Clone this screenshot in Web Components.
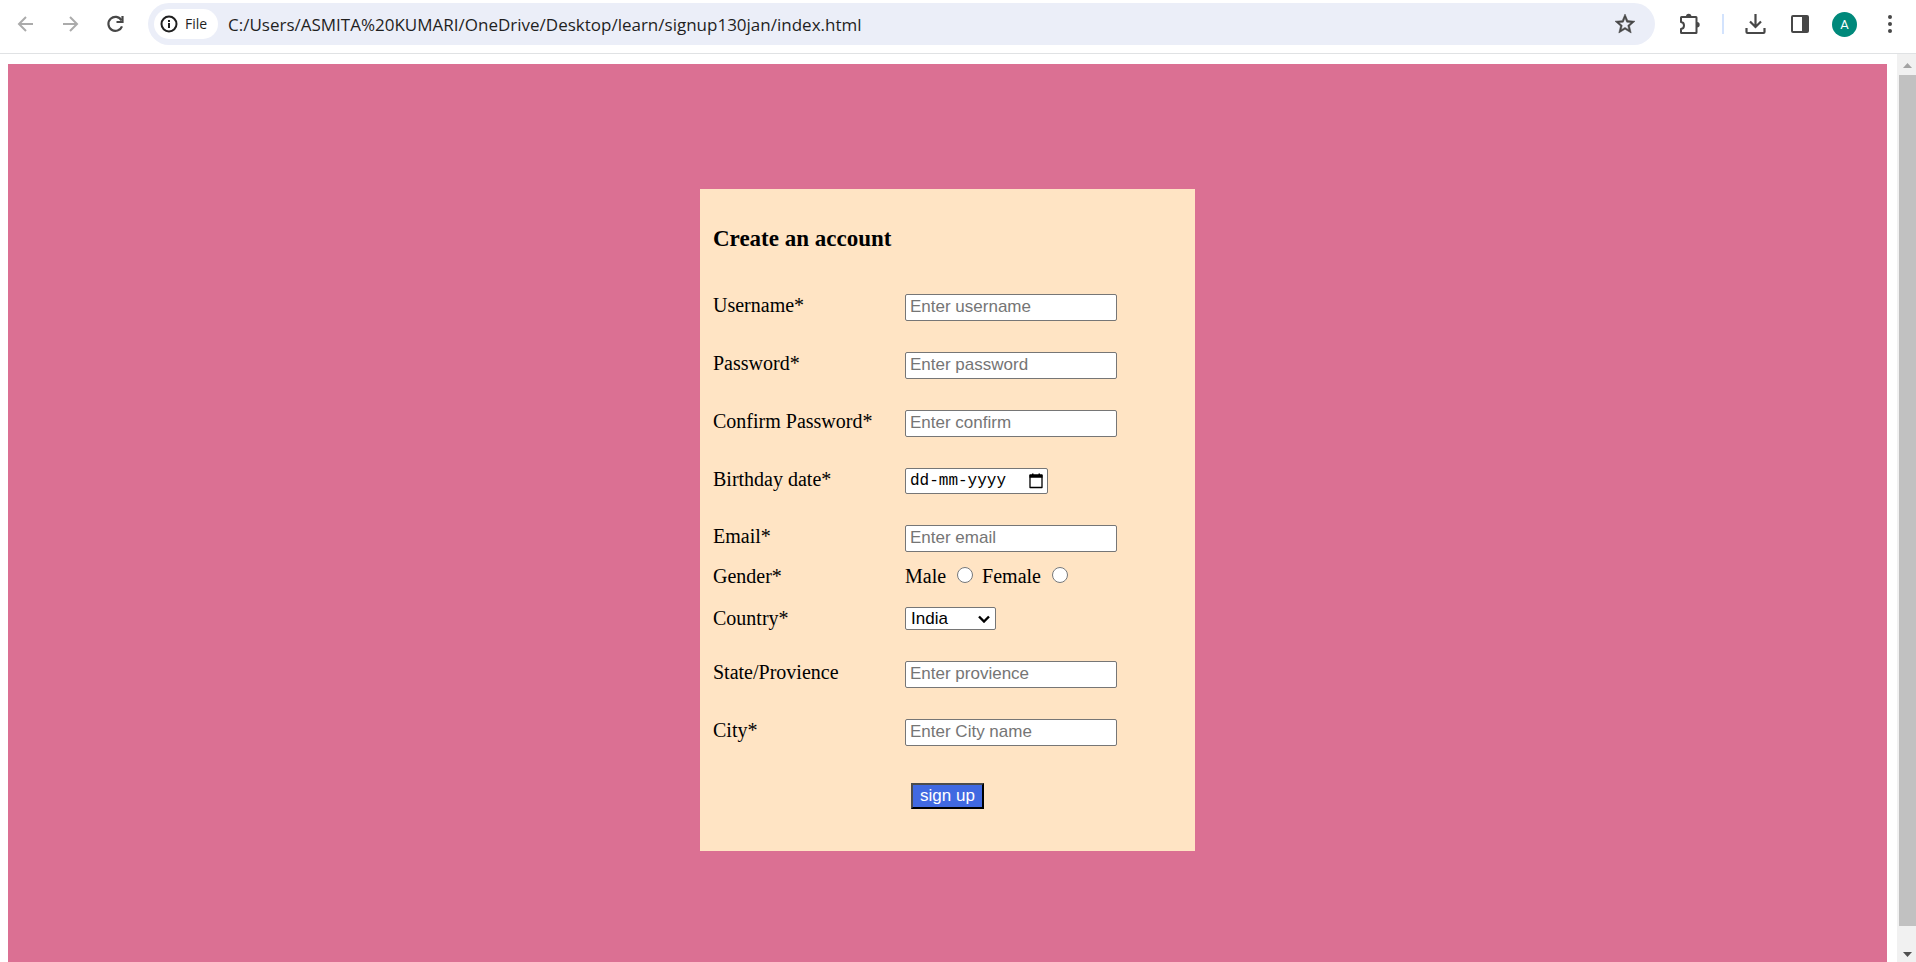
<!DOCTYPE html>
<html lang="en">
<head>
<meta charset="utf-8">
<title>Create an account</title>
<style>
html, body { margin: 0; height: 100%; overflow: hidden; background: #fff; }
</style>
</head>
<body>
<browser-window></browser-window>
<script>
const define = (name, html, setup) => {
  const template = document.createElement('template');
  template.innerHTML = html;
  customElements.define(name, class extends HTMLElement {
    constructor() {
      super();
      this.attachShadow({ mode: 'open' }).append(template.content.cloneNode(true));
    }
    connectedCallback() { if (setup) setup(this, this.shadowRoot); }
  });
};

/* Square toolbar button; the icon is passed in as an svg */
define('icon-button', `
  <style>
    :host { display: block; flex: none; color: #474747; }
    :host([disabled]) { color: #ababab; }
    button { display: grid; place-items: center; width: 24px; height: 24px; margin: 0; padding: 0; border: 0; background: none; color: inherit; }
  </style>
  <button type="button"><slot></slot></button>`,
  (host, root) => {
    const b = root.querySelector('button');
    b.setAttribute('aria-label', host.getAttribute('name'));
    b.disabled = host.hasAttribute('disabled');
  });

define('address-bar', `
  <style>
    :host { display: flex; align-items: center; flex: 1; min-width: 0; height: 42px; padding: 0 18px 0 6px; box-sizing: border-box; border-radius: 21px; background: #ebeef8; color: #1f1f1f; }
    button { display: flex; align-items: center; gap: 7px; flex: none; height: 30px; width: 64px; padding: 0 0 0 6px; border: 0; border-radius: 15px; background: #fff; color: #1f1f1f; font: 14px/20px "Open Sans", "Noto Sans", sans-serif; }
    input { flex: 1; min-width: 0; height: 30px; margin: 0 0 0 10px; padding: 0; border: 0; outline: 0; background: none; color: #1f1f1f; font: 17px/24px "Open Sans", "Noto Sans", sans-serif; }
  </style>
  <button type="button">
    <svg width="18" height="18" viewBox="0 0 18 18"><circle cx="9" cy="9" r="7.5" fill="none" stroke="currentColor" stroke-width="2"/><path d="M8 8h2v5H8zM8 5h2v2H8z" fill="currentColor"/></svg>
    <span>File</span>
  </button>
  <input type="text" aria-label="Address" spellcheck="false" value="C:/Users/ASMITA%20KUMARI/OneDrive/Desktop/learn/signup130jan/index.html">
  <icon-button name="Bookmark this page">
    <svg width="24" height="24" viewBox="0 0 24 24" fill="currentColor"><path d="M22 9.24l-7.19-.62L12 2 9.19 8.63 2 9.24l5.46 4.73L5.82 21 12 17.27 18.18 21l-1.63-7.03L22 9.24zM12 15.4l-3.76 2.27 1-4.28-3.32-2.88 4.38-.38L12 6.1l1.71 4.04 4.38.38-3.32 2.88 1 4.28L12 15.4z" stroke="currentColor" stroke-width=".5"/></svg>
  </icon-button>`);

define('browser-toolbar', `
  <style>
    :host { display: flex; align-items: center; flex: none; height: 53px; padding: 0 15px 5px 14px; box-sizing: border-box; background: #fff; }
    nav { display: flex; gap: 21px; margin-right: 20px; }
    .tools { display: flex; align-items: center; gap: 20px; margin-left: 23px; }
    .divider { width: 2px; height: 20px; background: #d3e3fd; }
    .avatar { width: 25px; height: 25px; padding: 0; border: 0; border-radius: 50%; background: #00897b; color: #fff; font: 13px/25px Roboto, sans-serif; text-align: center; }
  </style>
  <nav>
    <icon-button name="Back" disabled><svg width="24" height="24" viewBox="0 0 24 24" fill="none" stroke="currentColor" stroke-width="2"><path d="M19 12H6M12 5l-7 7 7 7"/></svg></icon-button>
    <icon-button name="Forward" disabled><svg width="24" height="24" viewBox="0 0 24 24" fill="none" stroke="currentColor" stroke-width="2"><path d="M4 12h13M11 5l7 7-7 7"/></svg></icon-button>
    <icon-button name="Reload"><svg width="24" height="24" viewBox="0 0 24 24" fill="none" stroke="currentColor" stroke-width="2.2"><path d="M18 14.3A7 7 0 1 1 17.500 8.400"/><path d="M18.500 4v6h-6"/></svg></icon-button>
  </nav>
  <address-bar></address-bar>
  <div class="tools">
    <icon-button name="Extensions"><svg width="24" height="24" viewBox="0 0 24 24"><path d="M3.500 5h14.500q.5 0 .5.500v15q0 .5-.5.500H3.500q-.5 0-.5-.5V17c4-.5 4-6.500 0-7V5.500q0-.5.500-.5z" fill="none" stroke="currentColor" stroke-width="2" stroke-linejoin="round"/><path d="M8 4.500a2.700 2.700 0 0 1 5.400 0zM19 10a2.700 2.700 0 0 1 0 5.400z" fill="currentColor"/></svg></icon-button>
    <span class="divider"></span>
    <icon-button name="Downloads"><svg width="24" height="24" viewBox="0 0 24 24" fill="none" stroke="currentColor" stroke-width="2.200"><path d="M11.500 2v13M6 9.500l5.500 5.500L17 9.500M2.500 16v4q0 1 1 1h16q1 0 1-1v-4"/></svg></icon-button>
    <icon-button name="Side panel"><svg width="24" height="24" viewBox="0 0 24 24"><rect x="4" y="4" width="16" height="16" rx="1" fill="none" stroke="currentColor" stroke-width="2"/><path d="M14 4h6v16h-6z" fill="currentColor"/></svg></icon-button>
    <button class="avatar" type="button" aria-label="Profile A">A</button>
    <icon-button name="Menu"><svg width="24" height="24" viewBox="0 0 24 24" fill="currentColor"><circle cx="13" cy="5" r="2"/><circle cx="13" cy="12" r="2"/><circle cx="13" cy="19" r="2"/></svg></icon-button>
  </div>`);

/* One line of the form: the label column, then the control */
define('form-row', `
  <style>
    :host { display: grid; grid-template-columns: 192px 1fr; align-items: start; margin-bottom: 31px; }
    :host([space="small"]) { margin-bottom: 13px; }
    :host([space="medium"]) { margin-bottom: 19px; }
  </style>
  <slot name="label"></slot><slot></slot>`);

define('signup-form', `
  <style>
    :host { display: block; box-sizing: border-box; width: 495px; max-width: 100%; padding: 37px 13px 42px; background: bisque; color: #000; font: 20px/23px "Liberation Serif", serif; }
    h3 { margin: 0 0 42px; font-size: 23px; line-height: 26px; }
    form { margin: 0; }
    input, select, button { margin: 0; box-sizing: border-box; font: 17px/19px "Liberation Sans", sans-serif; color: #000; }
    .text, .date, select { border: 1px solid #767676; border-radius: 2px; background: #fff; }
    .text { width: 212px; height: 27px; padding: 0 4px 2px; }
    .text::placeholder { color: #757575; }
    .date { display: flex; align-items: center; justify-content: space-between; box-sizing: border-box; width: 143px; height: 26px; padding: 0 4px; }
    .date input { width: 104px; height: 20px; padding: 0; border: 0; background: none; font: 16px/20px "Liberation Mono", monospace; }
    .date input::placeholder { color: #000; }
    .date button { display: grid; place-items: center; width: 15px; height: 16px; padding: 0; border: 0; background: none; }
    .gender { display: flex; align-items: center; gap: 9px; }
    .gender label { display: flex; align-items: center; gap: 11px; }
    .gender input { width: 16px; height: 16px; margin-bottom: 3px; }
    .choice { display: grid; width: 91px; }
    .choice > * { grid-area: 1 / 1; }
    .choice svg { place-self: center end; margin-right: 6px; pointer-events: none; }
    select { appearance: none; width: 91px; height: 23px; padding: 0 0 0 5px; }
    .submit { display: block; width: 73px; height: 26px; margin: 37px 0 0 198px; padding: 0 0 2px; border: 2px solid; border-color: #4c4c4c #000 #000 #4c4c4c; background: royalblue; color: #fff; }
    form-row:last-of-type { margin-bottom: 0; }
  </style>
  <form>
    <h3>Create an account</h3>
    <form-row><label slot="label" for="user">Username*</label><input class="text" id="user" type="text" placeholder="Enter username"></form-row>
    <form-row><label slot="label" for="pass">Password*</label><input class="text" id="pass" type="password" placeholder="Enter password"></form-row>
    <form-row><label slot="label" for="confirm">Confirm Password*</label><input class="text" id="confirm" type="password" placeholder="Enter confirm"></form-row>
    <form-row><label slot="label" for="birth">Birthday date*</label><span class="date"><input id="birth" type="text" placeholder="dd-mm-yyyy"><button type="button" aria-label="Show date picker"><svg width="14" height="16" viewBox="0 0 14 16"><path d="M1 2h12v12.500H1z" fill="none" stroke="#000" stroke-width="1.300" stroke-linejoin="round"/><path d="M.5 2h13v2.800H.5zM3 .5h1.500V3H3zM9.500.5H11V3H9.500z"/></svg></button></span></form-row>
    <form-row space="small"><label slot="label" for="email">Email*</label><input class="text" id="email" type="email" placeholder="Enter email"></form-row>
    <form-row space="medium"><span slot="label" id="gender">Gender*</span><div class="gender" role="radiogroup" aria-labelledby="gender"><label>Male<input type="radio" name="gender"></label><label>Female<input type="radio" name="gender"></label></div></form-row>
    <form-row><label slot="label" for="country">Country*</label><span class="choice"><select id="country"><option>India</option></select><svg width="12" height="8" viewBox="0 0 12 8"><path d="M1 1.500l5 5 5-5" fill="none" stroke="#000" stroke-width="2.400"/></svg></span></form-row>
    <form-row><label slot="label" for="state">State/Provience</label><input class="text" id="state" type="text" placeholder="Enter provience"></form-row>
    <form-row><label slot="label" for="city">City*</label><input class="text" id="city" type="text" placeholder="Enter City name"></form-row>
    <button class="submit" type="button">sign up</button>
  </form>`);

define('scroll-bar', `
  <style>
    :host { display: flex; flex-direction: column; flex: none; width: 19px; background: #f1f1f1; }
    svg { flex: none; display: block; }
    .thumb { flex: 1; margin-left: 2px; background: #c1c1c1; }
    .track { height: 15px; }
  </style>
  <svg width="19" height="21" viewBox="0 0 19 21"><path d="M6 14l4.500-5 4.500 5z" fill="#a3a3a3"/></svg>
  <div class="thumb"></div><div class="track"></div>
  <svg width="19" height="21" viewBox="0 0 19 21"><path d="M6 11l4.500 5 4.500-5z" fill="#505050"/></svg>`);

define('browser-window', `
  <style>
    :host { display: flex; flex-direction: column; height: 100vh; }
    .view { display: flex; flex: 1; min-height: 0; border-top: 1px solid #e0e2e4; }
    main { display: flex; flex: 1; min-width: 0; padding: 10px 10px 0 8px; overflow: hidden; }
    .backdrop { display: flex; flex: 1; align-items: flex-start; justify-content: center; padding-top: 125px; background: palevioletred; }
  </style>
  <browser-toolbar></browser-toolbar>
  <div class="view">
    <main><div class="backdrop"><signup-form></signup-form></div></main>
    <scroll-bar></scroll-bar>
  </div>`);
</script>
</body>
</html>
